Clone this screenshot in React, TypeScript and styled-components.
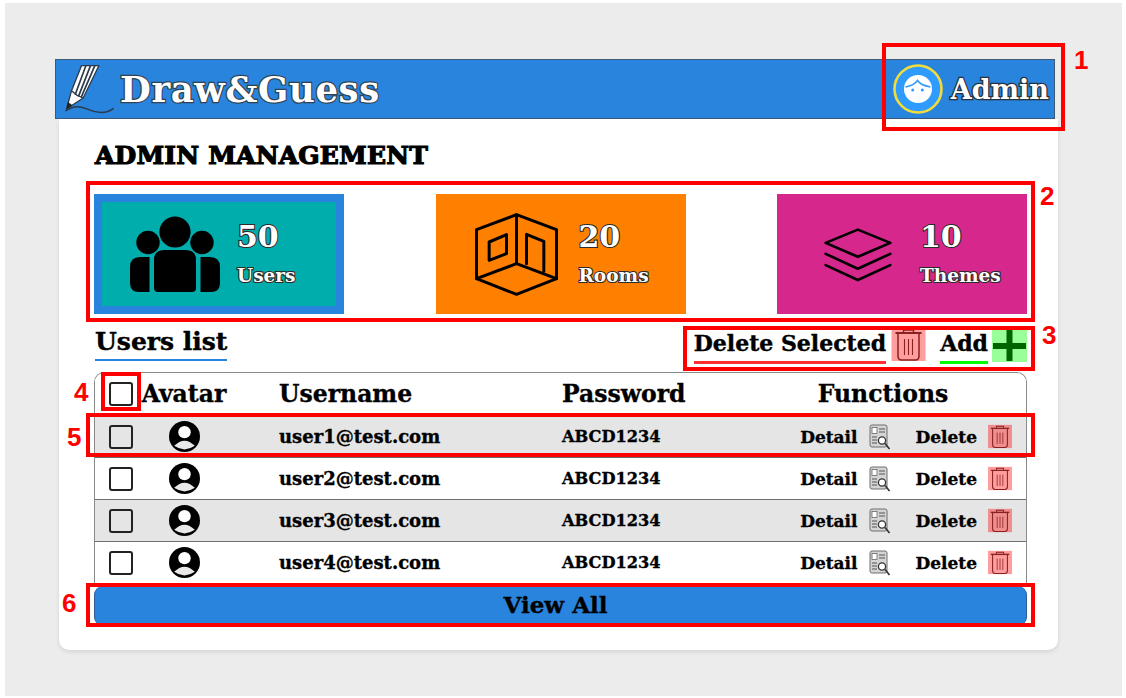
import { FC } from "react";
import styled, { createGlobalStyle } from "styled-components";

const GlobalStyle = createGlobalStyle`
  html, body {
    margin: 0;
    background: #ffffff;
  }
  body {
    font-family: "DejaVu Serif", "Liberation Serif", serif;
    font-weight: 700;
    color: #000000;
  }
`;

const Page = styled.div`
  position: relative;
  box-sizing: border-box;
  width: 1117px;
  height: 693px;
  margin: 3px 4px 2px 5px;
  padding: 56px 0 0 54px;
  background: #ececec;
`;

const Shell = styled.div`
  width: 999px;
  display: flex;
  flex-direction: column;
`;

const Header = styled.header`
  box-sizing: border-box;
  width: 1000px;
  height: 60px;
  margin-left: -4px;
  padding: 0 5px 0 7px;
  display: flex;
  align-items: center;
  background: #2884dd;
  border: 1px solid #3d5a78;
`;

const Brand = styled.div`
  display: flex;
  align-items: center;
  gap: 5px;
`;

const BrandName = styled.span`
  font-size: 35.5px;
  letter-spacing: 0.6px;
  color: #ffffff;
  -webkit-text-stroke: 2.4px #33414f;
  paint-order: stroke fill;
`;

const AdminBox = styled.div`
  margin-left: auto;
  display: flex;
  align-items: center;
  gap: 8px;
`;

const AdminName = styled.span`
  font-size: 27px;
  color: #ffffff;
  -webkit-text-stroke: 2.6px #26323e;
  paint-order: stroke fill;
`;

const Card = styled.main`
  box-sizing: border-box;
  height: 531px;
  padding: 20px 31px 0 35px;
  display: flex;
  flex-direction: column;
  background: #ffffff;
  border-radius: 0 0 10px 10px;
  box-shadow: 0 2px 4px rgba(0, 0, 0, 0.1);
`;

const PageTitle = styled.h1`
  margin: 1px 0 0 1px;
  height: 31px;
  font-size: 25px;
  line-height: 32px;
  font-weight: 700;
  letter-spacing: 0.2px;
  -webkit-text-stroke: 1.2px #000000;
`;

const StatsRow = styled.section`
  margin-top: 23px;
  display: flex;
  justify-content: space-between;
`;

const StatCard = styled.div<{ $bg: string; $ring?: boolean }>`
  box-sizing: border-box;
  width: 250px;
  height: 120px;
  padding-left: 18px;
  display: flex;
  align-items: center;
  background: ${(p) => p.$bg};
  box-shadow: ${(p) => (p.$ring ? "inset 0 0 0 8px #2884dd" : "none")};
`;

const StatIcon = styled.div`
  width: 125px;
  display: flex;
  justify-content: center;
`;

const StatText = styled.div`
  display: flex;
  flex-direction: column;
  gap: 10px;
  color: #ffffff;
  paint-order: stroke fill;
  -webkit-text-stroke: 2.2px #2b2b2b;
`;

const StatValue = styled.div`
  font-size: 30px;
  line-height: 34px;
`;

const StatLabel = styled.div`
  font-size: 18.5px;
  line-height: 24px;
`;

const ListBar = styled.div`
  margin-top: 14px;
  height: 44px;
  display: flex;
  align-items: flex-start;
`;

const ListTitle = styled.div`
  margin-left: 1px;
  height: 31px;
  font-size: 25px;
  line-height: 27px;
  border-bottom: 2.5px solid #2884dd;
  -webkit-text-stroke: 0.4px #000000;
`;

const ListActions = styled.div`
  margin-left: auto;
  display: flex;
  align-items: flex-start;
`;

const ActionLabel = styled.div<{ $line: string }>`
  height: 33px;
  font-size: 22px;
  line-height: 31px;
  white-space: nowrap;
  border-bottom: 3px solid ${(p) => p.$line};
  -webkit-text-stroke: 0.4px #000000;
`;

const ActionGroup = styled.div<{ $gap?: number }>`
  display: flex;
  align-items: flex-start;
  margin-left: ${(p) => p.$gap ?? 0}px;
`;

const PlusBox = styled.div`
  width: 35px;
  height: 33px;
  margin-top: 1px;
  display: flex;
  align-items: center;
  justify-content: center;
  background: #99ff99;
`;

const Table = styled.section`
  box-sizing: border-box;
  height: 214px;
  border: 1px solid #8a8a8a;
  border-bottom: none;
  border-radius: 10px 10px 0 0;
  overflow: hidden;
`;

const Row = styled.div<{ $shaded?: boolean; $head?: boolean }>`
  box-sizing: border-box;
  height: 42px;
  display: grid;
  grid-template-columns: 46px 138px 283px 178px 1fr;
  align-items: center;
  background: ${(p) => (p.$shaded ? "#e5e5e5" : "#ffffff")};
  border-top: ${(p) => (p.$head ? "none" : "1px solid #6e6e6e")};
  font-size: ${(p) => (p.$head ? 23.5 : 18)}px;
  -webkit-text-stroke: 0.35px #000000;
`;

const PasswordCell = styled.div`
  font-size: 16.2px;
`;

const CheckBox = styled.input.attrs({ type: "checkbox" })`
  appearance: none;
  box-sizing: border-box;
  width: 24px;
  height: 24px;
  margin: 0 0 0 14px;
  background: transparent;
  border: 2.5px solid #222222;
  border-radius: 3px;
`;

const AvatarCell = styled.div`
  width: 86px;
  display: flex;
  justify-content: center;
`;

const Functions = styled.div`
  display: flex;
  align-items: center;
  justify-content: flex-end;
  padding-right: 14px;
  font-size: 17px;
`;

const FunctionsHead = styled.div`
  text-align: center;
`;

const Spaced = styled.span<{ $left?: number; $right: number }>`
  margin-left: ${(p) => p.$left ?? 0}px;
  margin-right: ${(p) => p.$right}px;
`;

const ViewAll = styled.button`
  height: 40px;
  padding: 0 10px 4px 0;
  background: #2884dd;
  border: none;
  border-left: 1px solid #2d5f94;
  border-right: 1px solid #2d5f94;
  border-radius: 9px;
  font-family: inherit;
  font-weight: 700;
  font-size: 23px;
  color: #000000;
  -webkit-text-stroke: 0.35px #000000;
`;

const Callout = styled.div<{ $x: number; $y: number; $w: number; $h: number }>`
  position: absolute;
  box-sizing: border-box;
  left: ${(p) => p.$x - 5}px;
  top: ${(p) => p.$y - 3}px;
  width: ${(p) => p.$w}px;
  height: ${(p) => p.$h}px;
  border: 4px solid #ff0000;
  pointer-events: none;
`;

const CalloutNo = styled.div<{ $x: number; $y: number }>`
  position: absolute;
  left: ${(p) => p.$x - 5}px;
  top: ${(p) => p.$y - 3}px;
  font-family: "Liberation Sans", Arial, sans-serif;
  font-size: 26px;
  line-height: 30px;
  font-weight: 700;
  color: #ff0000;
`;

const Logo: FC = () => (
  <svg width="52" height="50" viewBox="190 190 155 150">
    <path
      d="M200 325 L215 270 L245 195 L297 195 L250 292 Z"
      fill="#ffffff"
      stroke="#2b3a4a"
      strokeWidth="4"
      strokeLinejoin="round"
    />
    <path d="M258 195 L226 282 M272 195 L236 287 M285 195 L244 290" stroke="#2b3a4a" strokeWidth="5" fill="none" />
    <path d="M215 270 L232 284 L250 292" stroke="#2b3a4a" strokeWidth="4" fill="none" />
    <path d="M200 325 L204 304 L218 314 Z" fill="#222222" />
    <path
      d="M198 330 C225 312 245 318 265 326 C290 338 320 340 340 324"
      stroke="#2b3a4a"
      strokeWidth="4.5"
      fill="none"
      strokeLinecap="round"
    />
  </svg>
);

const AdminFace: FC = () => (
  <svg width="50" height="50" viewBox="0 0 50 50">
    <circle cx="25" cy="25" r="23.5" fill="#2f9bff" stroke="#f1dc3c" strokeWidth="2.6" />
    <circle cx="25" cy="25" r="14" fill="#ffffff" />
    <path d="M12.5 23 C18 22 22 20 24.5 16.5 C27 20.5 32 22 37.5 23" stroke="#2f9bff" strokeWidth="1.6" fill="none" />
    <circle cx="19.7" cy="26" r="1.5" fill="#2f9bff" />
    <circle cx="29.3" cy="26" r="1.5" fill="#2f9bff" />
  </svg>
);

const UsersIcon: FC = () => (
  <svg width="90" height="77" viewBox="0 0 90 77">
    <circle cx="45" cy="16" r="15.6" />
    <circle cx="18" cy="26.5" r="11.7" />
    <circle cx="72" cy="26.5" r="11.7" />
    <path d="M34 34 H56 Q66 34 66 44 V72 Q66 76 62 76 H28 Q24 76 24 72 V44 Q24 34 34 34 Z" />
    <path d="M10 41 H19.5 V76 H9 Q0 76 0 67 V51 Q0 41 10 41 Z" />
    <path d="M80 41 H70.5 V76 H81 Q90 76 90 67 V51 Q90 41 80 41 Z" />
  </svg>
);

const RoomIcon: FC = () => (
  <svg width="87" height="85" viewBox="160 90 260 255">
    <g fill="none" stroke="#000000" strokeWidth="9" strokeLinejoin="round" strokeLinecap="round">
      <path d="M290 98 L410 143 V290 L290 337 L170 290 V143 Z" />
      <path d="M290 98 V245 M170 290 L290 245 L410 290" />
      <path d="M208 180 L260 158 V215 L208 235 Z" />
      <path d="M320 245 V157 L372 178 V268" />
    </g>
  </svg>
);

const LayersIcon: FC = () => (
  <svg width="70" height="57" viewBox="185 135 211 170">
    <g fill="none" stroke="#000000" strokeWidth="8" strokeLinejoin="round" strokeLinecap="round">
      <path d="M290 145 L388 185 L290 227 L193 185 Z" />
      <path d="M193 218 L290 263 L388 218" />
      <path d="M193 252 L290 297 L388 252" />
    </g>
  </svg>
);

const TrashIcon: FC<{ w: number; h: number }> = ({ w, h }) => (
  <svg width={w} height={h} viewBox="0 0 34 33" style={{ flex: "none" }}>
    <rect width="34" height="33" fill="#ff0000" fillOpacity="0.38" />
    <g fill="none" stroke="#8a2020" strokeWidth="1.5">
      <path d="M12 4 V2 H22 V4" />
      <path d="M4 5 H30" strokeWidth="2" />
      <path d="M6.5 6 V28 Q6.5 32 10 32 H24 Q27.5 32 27.5 28 V6" />
      <path d="M13 11 V27 M17 11 V27 M21 11 V27" strokeWidth="1.1" />
    </g>
  </svg>
);

const DetailIcon: FC = () => (
  <svg width="22" height="26" viewBox="0 0 22 26" style={{ flex: "none" }}>
    <rect x="1" y="1" width="17" height="22" rx="2" fill="#d4d4d4" stroke="#6f6f6f" />
    <rect x="3" y="3.5" width="5" height="6" fill="#ffffff" stroke="#666666" strokeWidth="0.8" />
    <path d="M10 5 H16 M10 8 H16 M3 13 H8 M3 16 H8 M3 19 H8" stroke="#555555" />
    <circle cx="13" cy="16.5" r="3.6" fill="#ffffff" stroke="#333333" strokeWidth="1.3" />
    <path d="M16 19.5 L20.5 25" stroke="#333333" strokeWidth="1.7" />
  </svg>
);

const AvatarIcon: FC = () => (
  <svg width="31" height="31" viewBox="0 0 30 30">
    <circle cx="15" cy="15" r="15" fill="#000000" />
    <circle cx="15" cy="10.8" r="6" fill="#ffffff" />
    <path d="M5 24 Q15 14 25 24 Q15 31 5 24 Z" fill="#e8e8e8" />
  </svg>
);

const PlusIcon: FC = () => (
  <svg width="33" height="31" viewBox="0 0 33 31">
    <path d="M16.5 1 V30 M1 16 H32" stroke="#006400" strokeWidth="6" strokeLinecap="round" />
  </svg>
);

const users = ["user1@test.com", "user2@test.com", "user3@test.com", "user4@test.com"];

const callouts = [
  { x: 882, y: 43, w: 183, h: 88 },
  { x: 86, y: 181, w: 949, h: 141 },
  { x: 683, y: 326, w: 352, h: 45 },
  { x: 101, y: 372, w: 40, h: 39 },
  { x: 86, y: 413, w: 949, h: 44 },
  { x: 86, y: 583, w: 949, h: 44 },
];

const numbers = [
  { n: 1, x: 1074, y: 45 },
  { n: 2, x: 1040, y: 181 },
  { n: 3, x: 1042, y: 320 },
  { n: 4, x: 74, y: 377 },
  { n: 5, x: 67, y: 422 },
  { n: 6, x: 62, y: 588 },
];

export default function App() {
  return (
    <Page>
      <GlobalStyle />
      <Shell>
        <Header>
          <Brand>
            <Logo />
            <BrandName>Draw&amp;Guess</BrandName>
          </Brand>
          <AdminBox>
            <AdminFace />
            <AdminName>Admin</AdminName>
          </AdminBox>
        </Header>
        <Card>
          <PageTitle>ADMIN MANAGEMENT</PageTitle>
          <StatsRow>
            <StatCard $bg="#00adad" $ring>
              <StatIcon>
                <UsersIcon />
              </StatIcon>
              <StatText>
                <StatValue>50</StatValue>
                <StatLabel>Users</StatLabel>
              </StatText>
            </StatCard>
            <StatCard $bg="#ff8000">
              <StatIcon>
                <RoomIcon />
              </StatIcon>
              <StatText>
                <StatValue>20</StatValue>
                <StatLabel>Rooms</StatLabel>
              </StatText>
            </StatCard>
            <StatCard $bg="#d6278c">
              <StatIcon>
                <LayersIcon />
              </StatIcon>
              <StatText>
                <StatValue>10</StatValue>
                <StatLabel>Themes</StatLabel>
              </StatText>
            </StatCard>
          </StatsRow>
          <ListBar>
            <ListTitle>Users list</ListTitle>
            <ListActions>
              <ActionGroup>
                <ActionLabel $line="#ff3030">Delete Selected</ActionLabel>
                <Spaced $left={5} $right={0}>
                  <TrashIcon w={35} h={33} />
                </Spaced>
              </ActionGroup>
              <ActionGroup $gap={14}>
                <ActionLabel $line="#00ff00">Add</ActionLabel>
                <Spaced $left={4} $right={0}>
                  <PlusBox>
                    <PlusIcon />
                  </PlusBox>
                </Spaced>
              </ActionGroup>
            </ListActions>
          </ListBar>
          <Table>
            <Row $head>
              <CheckBox />
              <AvatarCell>Avatar</AvatarCell>
              <div>Username</div>
              <div>Password</div>
              <FunctionsHead>Functions</FunctionsHead>
            </Row>
            {users.map((user, i) => (
              <Row key={user} $shaded={i % 2 === 0}>
                <CheckBox />
                <AvatarCell>
                  <AvatarIcon />
                </AvatarCell>
                <div>{user}</div>
                <PasswordCell>ABCD1234</PasswordCell>
                <Functions>
                  <Spaced $right={12}>Detail</Spaced>
                  <DetailIcon />
                  <Spaced $left={24} $right={11}>
                    Delete
                  </Spaced>
                  <TrashIcon w={24} h={25} />
                </Functions>
              </Row>
            ))}
          </Table>
          <ViewAll>View All</ViewAll>
        </Card>
      </Shell>
      {callouts.map((c) => (
        <Callout key={c.y} $x={c.x} $y={c.y} $w={c.w} $h={c.h} />
      ))}
      {numbers.map((c) => (
        <CalloutNo key={c.n} $x={c.x} $y={c.y}>
          {c.n}
        </CalloutNo>
      ))}
    </Page>
  );
}
